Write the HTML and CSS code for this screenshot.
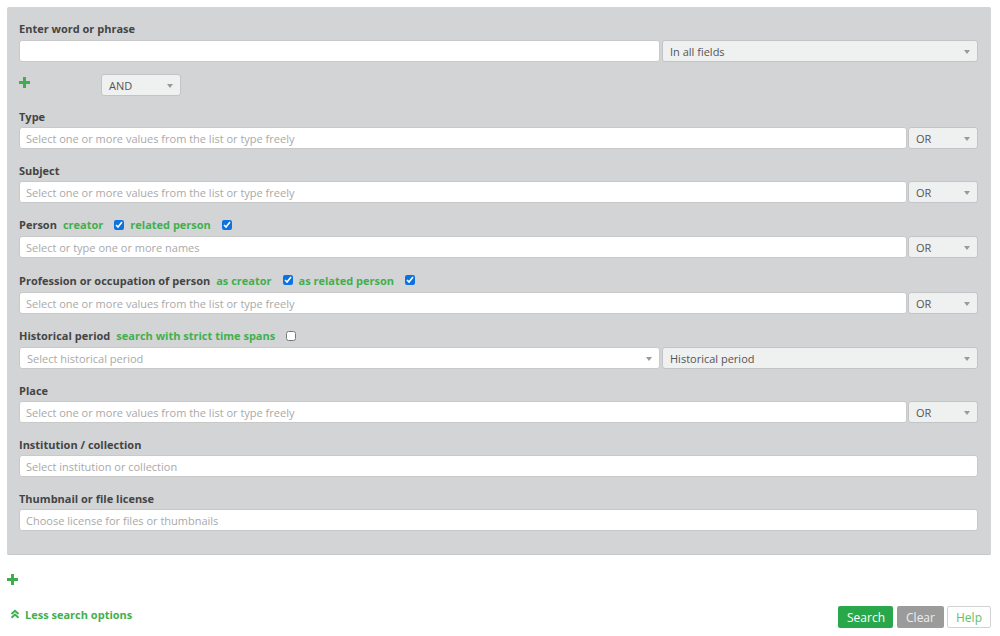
FILE: index.html
```html
<!DOCTYPE html>
<html lang="en">
<head>
  <meta charset="UTF-8" />
  <meta name="viewport" content="width=device-width, initial-scale=1.0"/>
  <title>Advanced search</title>
  <link rel="stylesheet" href="styles.css">
</head>
<body>

  <div class="page">
    <div class="panel">

      <!-- Free text -->
      <div class="field">
        <div class="field-label">Enter word or phrase</div>
        <div class="row">
          <input type="text" class="input" />
          <div class="select wide"><span>In all fields</span><i class="caret"></i></div>
        </div>
      </div>

      <div class="operator-row">
        <svg class="plus" width="11" height="11" viewBox="0 0 11 11"><rect x="4" y="0" width="3" height="11"/><rect x="0" y="4" width="11" height="3"/></svg>
        <div class="select op"><span>AND</span><i class="caret"></i></div>
      </div>

      <div class="field">
        <div class="field-label">Type</div>
        <div class="row">
          <input type="text" class="input" placeholder="Select one or more values from the list or type freely" />
          <div class="select or"><span>OR</span><i class="caret"></i></div>
        </div>
      </div>

      <div class="field">
        <div class="field-label">Subject</div>
        <div class="row">
          <input type="text" class="input" placeholder="Select one or more values from the list or type freely" />
          <div class="select or"><span>OR</span><i class="caret"></i></div>
        </div>
      </div>

      <div class="field">
        <div class="field-label mid">
          Person
          <span class="opt">creator</span><input type="checkbox" checked />
          <span class="opt">related person</span><input type="checkbox" checked />
        </div>
        <div class="row">
          <input type="text" class="input" placeholder="Select or type one or more names" />
          <div class="select or"><span>OR</span><i class="caret"></i></div>
        </div>
      </div>

      <div class="field">
        <div class="field-label tall">
          Profession or occupation of person
          <span class="opt">as creator</span><input type="checkbox" checked />
          <span class="opt">as related person</span><input type="checkbox" checked />
        </div>
        <div class="row">
          <input type="text" class="input" placeholder="Select one or more values from the list or type freely" />
          <div class="select or"><span>OR</span><i class="caret"></i></div>
        </div>
      </div>

      <div class="field">
        <div class="field-label mid">
          Historical period
          <span class="opt">search with strict time spans</span><input type="checkbox" />
        </div>
        <div class="row">
          <div class="select blank"><span class="ph">Select historical period</span><i class="caret"></i></div>
          <div class="select wide"><span>Historical period</span><i class="caret"></i></div>
        </div>
      </div>

      <div class="field">
        <div class="field-label">Place</div>
        <div class="row">
          <input type="text" class="input" placeholder="Select one or more values from the list or type freely" />
          <div class="select or"><span>OR</span><i class="caret"></i></div>
        </div>
      </div>

      <div class="field">
        <div class="field-label">Institution / collection</div>
        <div class="row">
          <input type="text" class="input" placeholder="Select institution or collection" />
        </div>
      </div>

      <div class="field last">
        <div class="field-label">Thumbnail or file license</div>
        <div class="row">
          <input type="text" class="input" placeholder="Choose license for files or thumbnails" />
        </div>
      </div>

    </div>

    <div class="add-group">
      <svg class="plus" width="11" height="11" viewBox="0 0 11 11"><rect x="4" y="0" width="3" height="11"/><rect x="0" y="4" width="11" height="3"/></svg>
    </div>

    <div class="footer-row">
      <a href="#" class="less">
        <svg width="10" height="10" viewBox="0 0 10 10"><polyline points="1.5,5 5,1.8 8.5,5"/><polyline points="1.5,8.8 5,5.6 8.5,8.8"/></svg>
        Less search options
      </a>
      <div class="buttons">
        <button class="btn btn-search">Search</button>
        <button class="btn btn-clear">Clear</button>
        <button class="btn btn-help">Help</button>
      </div>
    </div>
  </div>

</body>
</html>
```

FILE: styles.css
```css
* { box-sizing: border-box; margin: 0; padding: 0; }
body {
  font-family: "Open Sans", "DejaVu Sans", sans-serif;
  background: #fff;
  color: #444;
}
.page { padding: 7px 9px 0 7px; }
.panel {
  background: #d3d4d6;
  border-radius: 2px;
  border-bottom: 1px solid #c6c7c9;
  padding: 12px 13px 23px 12px;
}
.field { margin-bottom: 12px; }
.field.last { margin-bottom: 0; }
.field-label {
  display: flex;
  align-items: center;
  height: 18px;
  margin-bottom: 2px;
  font-size: 11px;
  font-weight: 700;
  color: #444;
}
.field:first-child .field-label { height: 19px; }
.field-label.mid { height: 19px; }
.field-label.tall { height: 20px; }
.opt {
  color: #3fb04d;
  margin-left: 6px;
}
.field-label input[type="checkbox"] {
  width: 10px;
  height: 10px;
  margin: 0 1px 0 11px;
  accent-color: #0b72e0;
}
.field-label .opt + input + .opt { margin-left: 5px; }
.row { display: flex; gap: 2px; }
.input {
  flex: 1;
  min-width: 0;
  height: 22px;
  background: #fff;
  border: 1px solid #c9c9c9;
  border-radius: 3px;
  padding: 0 6px;
  font-family: inherit;
  font-size: 11px;
  color: #444;
  outline: none;
}
.input::placeholder { color: #a9a9a9; }
.select {
  position: relative;
  display: flex;
  align-items: center;
  height: 22px;
  background: #eff0f0;
  border: 1px solid #c3c4c5;
  border-radius: 3px;
  padding: 0 20px 0 7px;
  font-size: 11px;
  color: #555;
}
.select.wide { width: 316px; }
.select.or { width: 70px; margin-left: -1px; }
.select.op { width: 80px; }
.select.blank {
  flex: 1;
  background: #fff;
  border-color: #c9c9c9;
}
.select .ph { color: #a9a9a9; }
.caret {
  position: absolute;
  right: 7px;
  top: 9px;
  width: 0;
  height: 0;
  border-left: 3px solid transparent;
  border-right: 3px solid transparent;
  border-top: 4px solid #999;
}
.operator-row {
  display: flex;
  align-items: center;
  height: 22px;
  margin-bottom: 11px;
}
.operator-row .plus { margin: -5px 71px 0 0; }
.plus { fill: #3cae4b; display: block; }
.add-group {
  height: 11px;
  margin-top: 19px;
}
.footer-row {
  display: flex;
  justify-content: space-between;
  align-items: center;
  margin-top: 21px;
}
.less {
  display: flex;
  align-items: center;
  gap: 5px;
  margin-left: 3px;
  margin-top: -6px;
  font-size: 11px;
  font-weight: 700;
  color: #3fb04d;
  text-decoration: none;
}
.less svg polyline {
  fill: none;
  stroke: #3fb04d;
  stroke-width: 2;
}
.buttons { display: flex; gap: 3px; }
.btn {
  height: 22px;
  padding: 0 8px;
  border-radius: 2px;
  border: 1px solid transparent;
  font-family: inherit;
  font-size: 12px;
  cursor: pointer;
}
.btn-search { background: #29a84b; color: #fff; width: 55px; margin-right: 1px; }
.btn-clear { background: #9b9b9b; color: #eee; width: 47px; }
.btn-help { background: #fff; border-color: #d2d2d2; color: #5cc26a; width: 44px; }
```
